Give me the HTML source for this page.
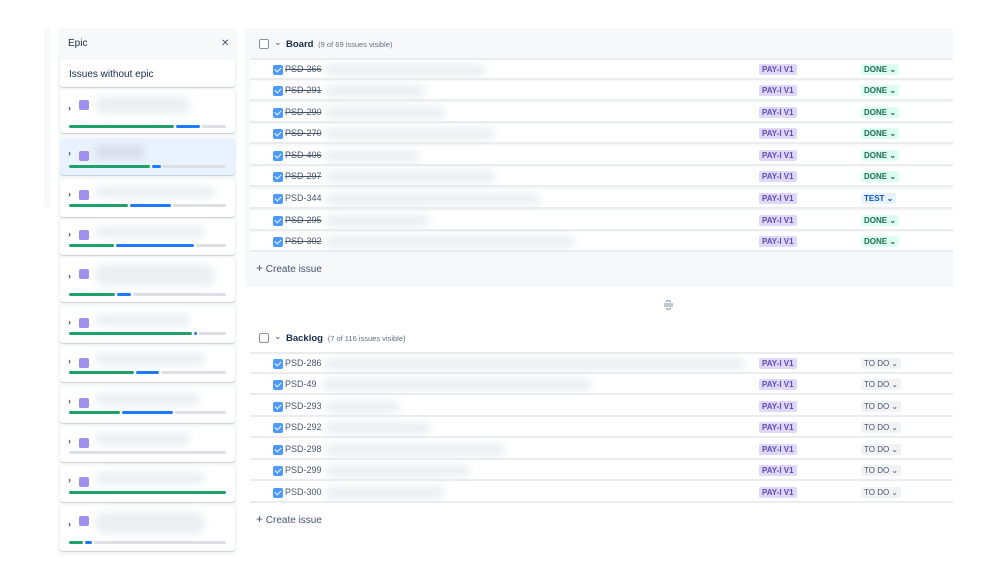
<!DOCTYPE html>
<html><head><meta charset="utf-8"><style>
*{box-sizing:border-box;margin:0;padding:0}
body{width:999px;height:562px;background:#fff;position:relative;overflow:hidden;font-family:"Liberation Sans",sans-serif;color:#44546f}
.a{position:absolute}
.blob{position:absolute;background:#eceef0;border-radius:10px;filter:blur(4px)}
.row{position:absolute;left:250px;width:703px;height:20px;background:#fff;border-bottom:2px solid #ebecf0}
.cb{position:absolute;left:23px;top:5px;width:10px;height:10px;background:#4c9aff;border-radius:2px}
.cb:after{content:"";position:absolute;left:3px;top:1px;width:3px;height:5px;border:solid #fff;border-width:0 1.5px 1.5px 0;transform:rotate(45deg)}
.key{position:absolute;left:35px;top:4px;font-size:9px;color:#44546f}
.s{text-decoration:line-through}
.tag{position:absolute;left:509px;top:4px;background:#dfd8fd;color:#5e4db2;font-size:8px;font-weight:bold;padding:1px 3px;border-radius:2px}
.st{position:absolute;left:611px;top:4px;font-size:8px;font-weight:bold;padding:1px 3px;border-radius:2px}
.done{background:#dcfff1;color:#216e4e}
.test{background:#e9f2ff;color:#0055cc}
.todo{background:#f1f2f4;color:#44546f;font-weight:normal}
.card{position:absolute;left:60px;width:175px;background:#fff;border-radius:3px;box-shadow:0 1px 1px rgba(9,30,66,.2)}
.chev{position:absolute;left:8px;font-size:9px;color:#44546f;font-weight:bold}
.sq{position:absolute;left:19px;width:10px;height:10px;background:#9f8fef;border-radius:2px}
.bar{position:absolute;height:3px;border-radius:2px}
.g{background:#22a06b}.b{background:#1d7afc}.gr{background:#dcdfe4}
</style></head><body>
<div class="a" style="left:44px;top:28px;width:6px;height:180px;background:#f7f8f9;border-radius:2px"></div>
<div class="a" style="left:58px;top:28px;width:179px;height:528px;background:#f7f8f9;border-radius:4px"></div>
<div class="a" style="left:68px;top:38px;font-size:10px;color:#172b4d">Epic</div>
<div class="a" style="left:221px;top:38px;font-size:10px;color:#44546f">✕</div>
<div class="card" style="top:60px;height:27px"><div class="a" style="left:9px;top:9px;font-size:10px;color:#172b4d">Issues without epic</div></div>

<div class="card" style="top:90px;height:43px"><span class="chev" style="top:13px">›</span><div class="sq" style="top:10px"></div><div class="blob" style="left:35px;top:6px;width:95px;height:18px"></div><div class="bar g" style="left:9px;top:35px;width:105px"></div><div class="bar b" style="left:116px;top:35px;width:24px"></div><div class="bar gr" style="left:142px;top:35px;width:24px"></div></div>
<div class="card" style="top:138px;height:37px;background:#e9f2ff"><span class="chev" style="top:10px">›</span><div class="sq" style="top:13px"></div><div class="blob" style="left:35px;top:8px;width:50px;height:12px;background:#d6dde8"></div><div class="bar g" style="left:9px;top:27px;width:81px"></div><div class="bar b" style="left:92px;top:27px;width:9px"></div><div class="bar gr" style="left:103px;top:27px;width:63px"></div></div>

<div class="card" style="top:180px;height:37px"><span class="chev" style="top:9px">›</span><div class="sq" style="top:10px"></div><div class="blob" style="left:35px;top:6px;width:120px;height:12px"></div><div class="bar g" style="left:9px;top:24px;width:59px"></div><div class="bar b" style="left:70px;top:24px;width:41px"></div><div class="bar gr" style="left:113px;top:24px;width:53px"></div></div>
<div class="card" style="top:220px;height:35px"><span class="chev" style="top:9px">›</span><div class="sq" style="top:10px"></div><div class="blob" style="left:35px;top:6px;width:110px;height:12px"></div><div class="bar g" style="left:9px;top:24px;width:45px"></div><div class="bar b" style="left:56px;top:24px;width:78px"></div><div class="bar gr" style="left:136px;top:24px;width:30px"></div></div>
<div class="card" style="top:258px;height:44px"><span class="chev" style="top:13px">›</span><div class="sq" style="top:11px"></div><div class="blob" style="left:35px;top:6px;width:120px;height:22px"></div><div class="bar g" style="left:9px;top:35px;width:46px"></div><div class="bar b" style="left:57px;top:35px;width:14px"></div><div class="bar gr" style="left:73px;top:35px;width:93px"></div></div>
<div class="card" style="top:307px;height:36px"><span class="chev" style="top:10px">›</span><div class="sq" style="top:11px"></div><div class="blob" style="left:35px;top:7px;width:95px;height:12px"></div><div class="bar g" style="left:9px;top:25px;width:123px"></div><div class="bar b" style="left:134px;top:25px;width:3px"></div><div class="bar gr" style="left:139px;top:25px;width:27px"></div></div>
<div class="card" style="top:347px;height:35px"><span class="chev" style="top:9px">›</span><div class="sq" style="top:11px"></div><div class="blob" style="left:35px;top:6px;width:110px;height:12px"></div><div class="bar g" style="left:9px;top:24px;width:65px"></div><div class="bar b" style="left:76px;top:24px;width:23px"></div><div class="bar gr" style="left:101px;top:24px;width:65px"></div></div>
<div class="card" style="top:387px;height:36px"><span class="chev" style="top:9px">›</span><div class="sq" style="top:11px"></div><div class="blob" style="left:35px;top:6px;width:105px;height:12px"></div><div class="bar g" style="left:9px;top:24px;width:51px"></div><div class="bar b" style="left:62px;top:24px;width:51px"></div><div class="bar gr" style="left:115px;top:24px;width:51px"></div></div>
<div class="card" style="top:427px;height:35px"><span class="chev" style="top:9px">›</span><div class="sq" style="top:11px"></div><div class="blob" style="left:35px;top:6px;width:95px;height:12px"></div><div class="bar gr" style="left:9px;top:24px;width:157px"></div></div>
<div class="card" style="top:466px;height:36px"><span class="chev" style="top:9px">›</span><div class="sq" style="top:11px"></div><div class="blob" style="left:35px;top:6px;width:110px;height:12px"></div><div class="bar g" style="left:9px;top:25px;width:157px"></div></div>
<div class="card" style="top:506px;height:45px"><span class="chev" style="top:13px">›</span><div class="sq" style="top:10px"></div><div class="blob" style="left:35px;top:6px;width:110px;height:22px"></div><div class="bar g" style="left:9px;top:35px;width:14px"></div><div class="bar b" style="left:25px;top:35px;width:7px"></div><div class="bar gr" style="left:34px;top:35px;width:132px"></div></div>

<div class="a" style="left:245px;top:28px;width:708px;height:259px;background:#f7f8f9;border-radius:4px 0 0 4px"></div>
<div class="a" style="left:259px;top:39px;width:10px;height:10px;border:1.5px solid #8590a2;border-radius:2px;background:#fff"></div>
<div class="a" style="left:274px;top:37px;font-size:9px;color:#44546f">⌄</div>
<div class="a" style="left:286px;top:39px;font-size:9.5px;color:#172b4d;font-weight:bold">Board <span style="font-weight:normal;font-size:7.5px;color:#626f86">&nbsp;(9 of 69 issues visible)</span></div>
<div class="a" style="left:250px;top:58px;width:703px;height:2px;background:#ebecf0"></div>

<div class="row" style="top:60px"><div class="cb"></div><span class="key s">PSD-366</span><div class="blob" style="left:75px;top:4px;width:160px;height:12px"></div><span class="tag">PAY-I V1</span><span class="st done">DONE ⌄</span></div>
<div class="row" style="top:81px"><div class="cb"></div><span class="key s">PSD-291</span><div class="blob" style="left:75px;top:4px;width:100px;height:12px"></div><span class="tag">PAY-I V1</span><span class="st done">DONE ⌄</span></div>
<div class="row" style="top:103px"><div class="cb"></div><span class="key s">PSD-290</span><div class="blob" style="left:75px;top:4px;width:120px;height:12px"></div><span class="tag">PAY-I V1</span><span class="st done">DONE ⌄</span></div>
<div class="row" style="top:124px"><div class="cb"></div><span class="key s">PSD-270</span><div class="blob" style="left:75px;top:4px;width:170px;height:12px"></div><span class="tag">PAY-I V1</span><span class="st done">DONE ⌄</span></div>
<div class="row" style="top:146px"><div class="cb"></div><span class="key s">PSD-406</span><div class="blob" style="left:75px;top:4px;width:95px;height:12px"></div><span class="tag">PAY-I V1</span><span class="st done">DONE ⌄</span></div>
<div class="row" style="top:167px"><div class="cb"></div><span class="key s">PSD-297</span><div class="blob" style="left:75px;top:4px;width:170px;height:12px"></div><span class="tag">PAY-I V1</span><span class="st done">DONE ⌄</span></div>
<div class="row" style="top:189px"><div class="cb"></div><span class="key">PSD-344</span><div class="blob" style="left:75px;top:4px;width:215px;height:12px"></div><span class="tag">PAY-I V1</span><span class="st test">TEST ⌄</span></div>
<div class="row" style="top:211px"><div class="cb"></div><span class="key s">PSD-295</span><div class="blob" style="left:75px;top:4px;width:105px;height:12px"></div><span class="tag">PAY-I V1</span><span class="st done">DONE ⌄</span></div>
<div class="row" style="top:232px"><div class="cb"></div><span class="key s">PSD-302</span><div class="blob" style="left:75px;top:4px;width:250px;height:12px"></div><span class="tag">PAY-I V1</span><span class="st done">DONE ⌄</span></div>
<div class="a" style="left:256px;top:261px;font-size:10px;color:#44546f"><span style="font-size:12px">+</span> Create issue</div>

<div class="a" style="left:664px;top:297px;width:9px;height:10px">
<svg width="9" height="10"><path d="M2 2 L4.5 0 L7 2 M0 4 H9 M0 6 H9 M2 8 L4.5 10 L7 8" stroke="#8590a2" stroke-width="1" fill="none"/></svg></div>

<div class="a" style="left:259px;top:333px;width:10px;height:10px;border:1.5px solid #8590a2;border-radius:2px;background:#fff"></div>
<div class="a" style="left:274px;top:331px;font-size:9px;color:#44546f">⌄</div>
<div class="a" style="left:286px;top:333px;font-size:9.5px;color:#172b4d;font-weight:bold">Backlog <span style="font-weight:normal;font-size:7.5px;color:#626f86">&nbsp;(7 of 116 issues visible)</span></div>
<div class="a" style="left:250px;top:352px;width:703px;height:2px;background:#ebecf0"></div>
<div class="row" style="top:354px"><div class="cb"></div><span class="key">PSD-286</span><div class="blob" style="left:75px;top:4px;width:420px;height:12px"></div><span class="tag">PAY-I V1</span><span class="st todo">TO DO ⌄</span></div>
<div class="row" style="top:375px"><div class="cb"></div><span class="key">PSD-49</span><div class="blob" style="left:72px;top:4px;width:270px;height:12px"></div><span class="tag">PAY-I V1</span><span class="st todo">TO DO ⌄</span></div>
<div class="row" style="top:397px"><div class="cb"></div><span class="key">PSD-293</span><div class="blob" style="left:75px;top:4px;width:75px;height:12px"></div><span class="tag">PAY-I V1</span><span class="st todo">TO DO ⌄</span></div>
<div class="row" style="top:418px"><div class="cb"></div><span class="key">PSD-292</span><div class="blob" style="left:75px;top:4px;width:105px;height:12px"></div><span class="tag">PAY-I V1</span><span class="st todo">TO DO ⌄</span></div>
<div class="row" style="top:440px"><div class="cb"></div><span class="key">PSD-298</span><div class="blob" style="left:75px;top:4px;width:180px;height:12px"></div><span class="tag">PAY-I V1</span><span class="st todo">TO DO ⌄</span></div>
<div class="row" style="top:461px"><div class="cb"></div><span class="key">PSD-299</span><div class="blob" style="left:75px;top:4px;width:145px;height:12px"></div><span class="tag">PAY-I V1</span><span class="st todo">TO DO ⌄</span></div>
<div class="row" style="top:483px"><div class="cb"></div><span class="key">PSD-300</span><div class="blob" style="left:75px;top:4px;width:120px;height:12px"></div><span class="tag">PAY-I V1</span><span class="st todo">TO DO ⌄</span></div>
<div class="a" style="left:256px;top:512px;font-size:10px;color:#44546f"><span style="font-size:12px">+</span> Create issue</div>
</body></html>
